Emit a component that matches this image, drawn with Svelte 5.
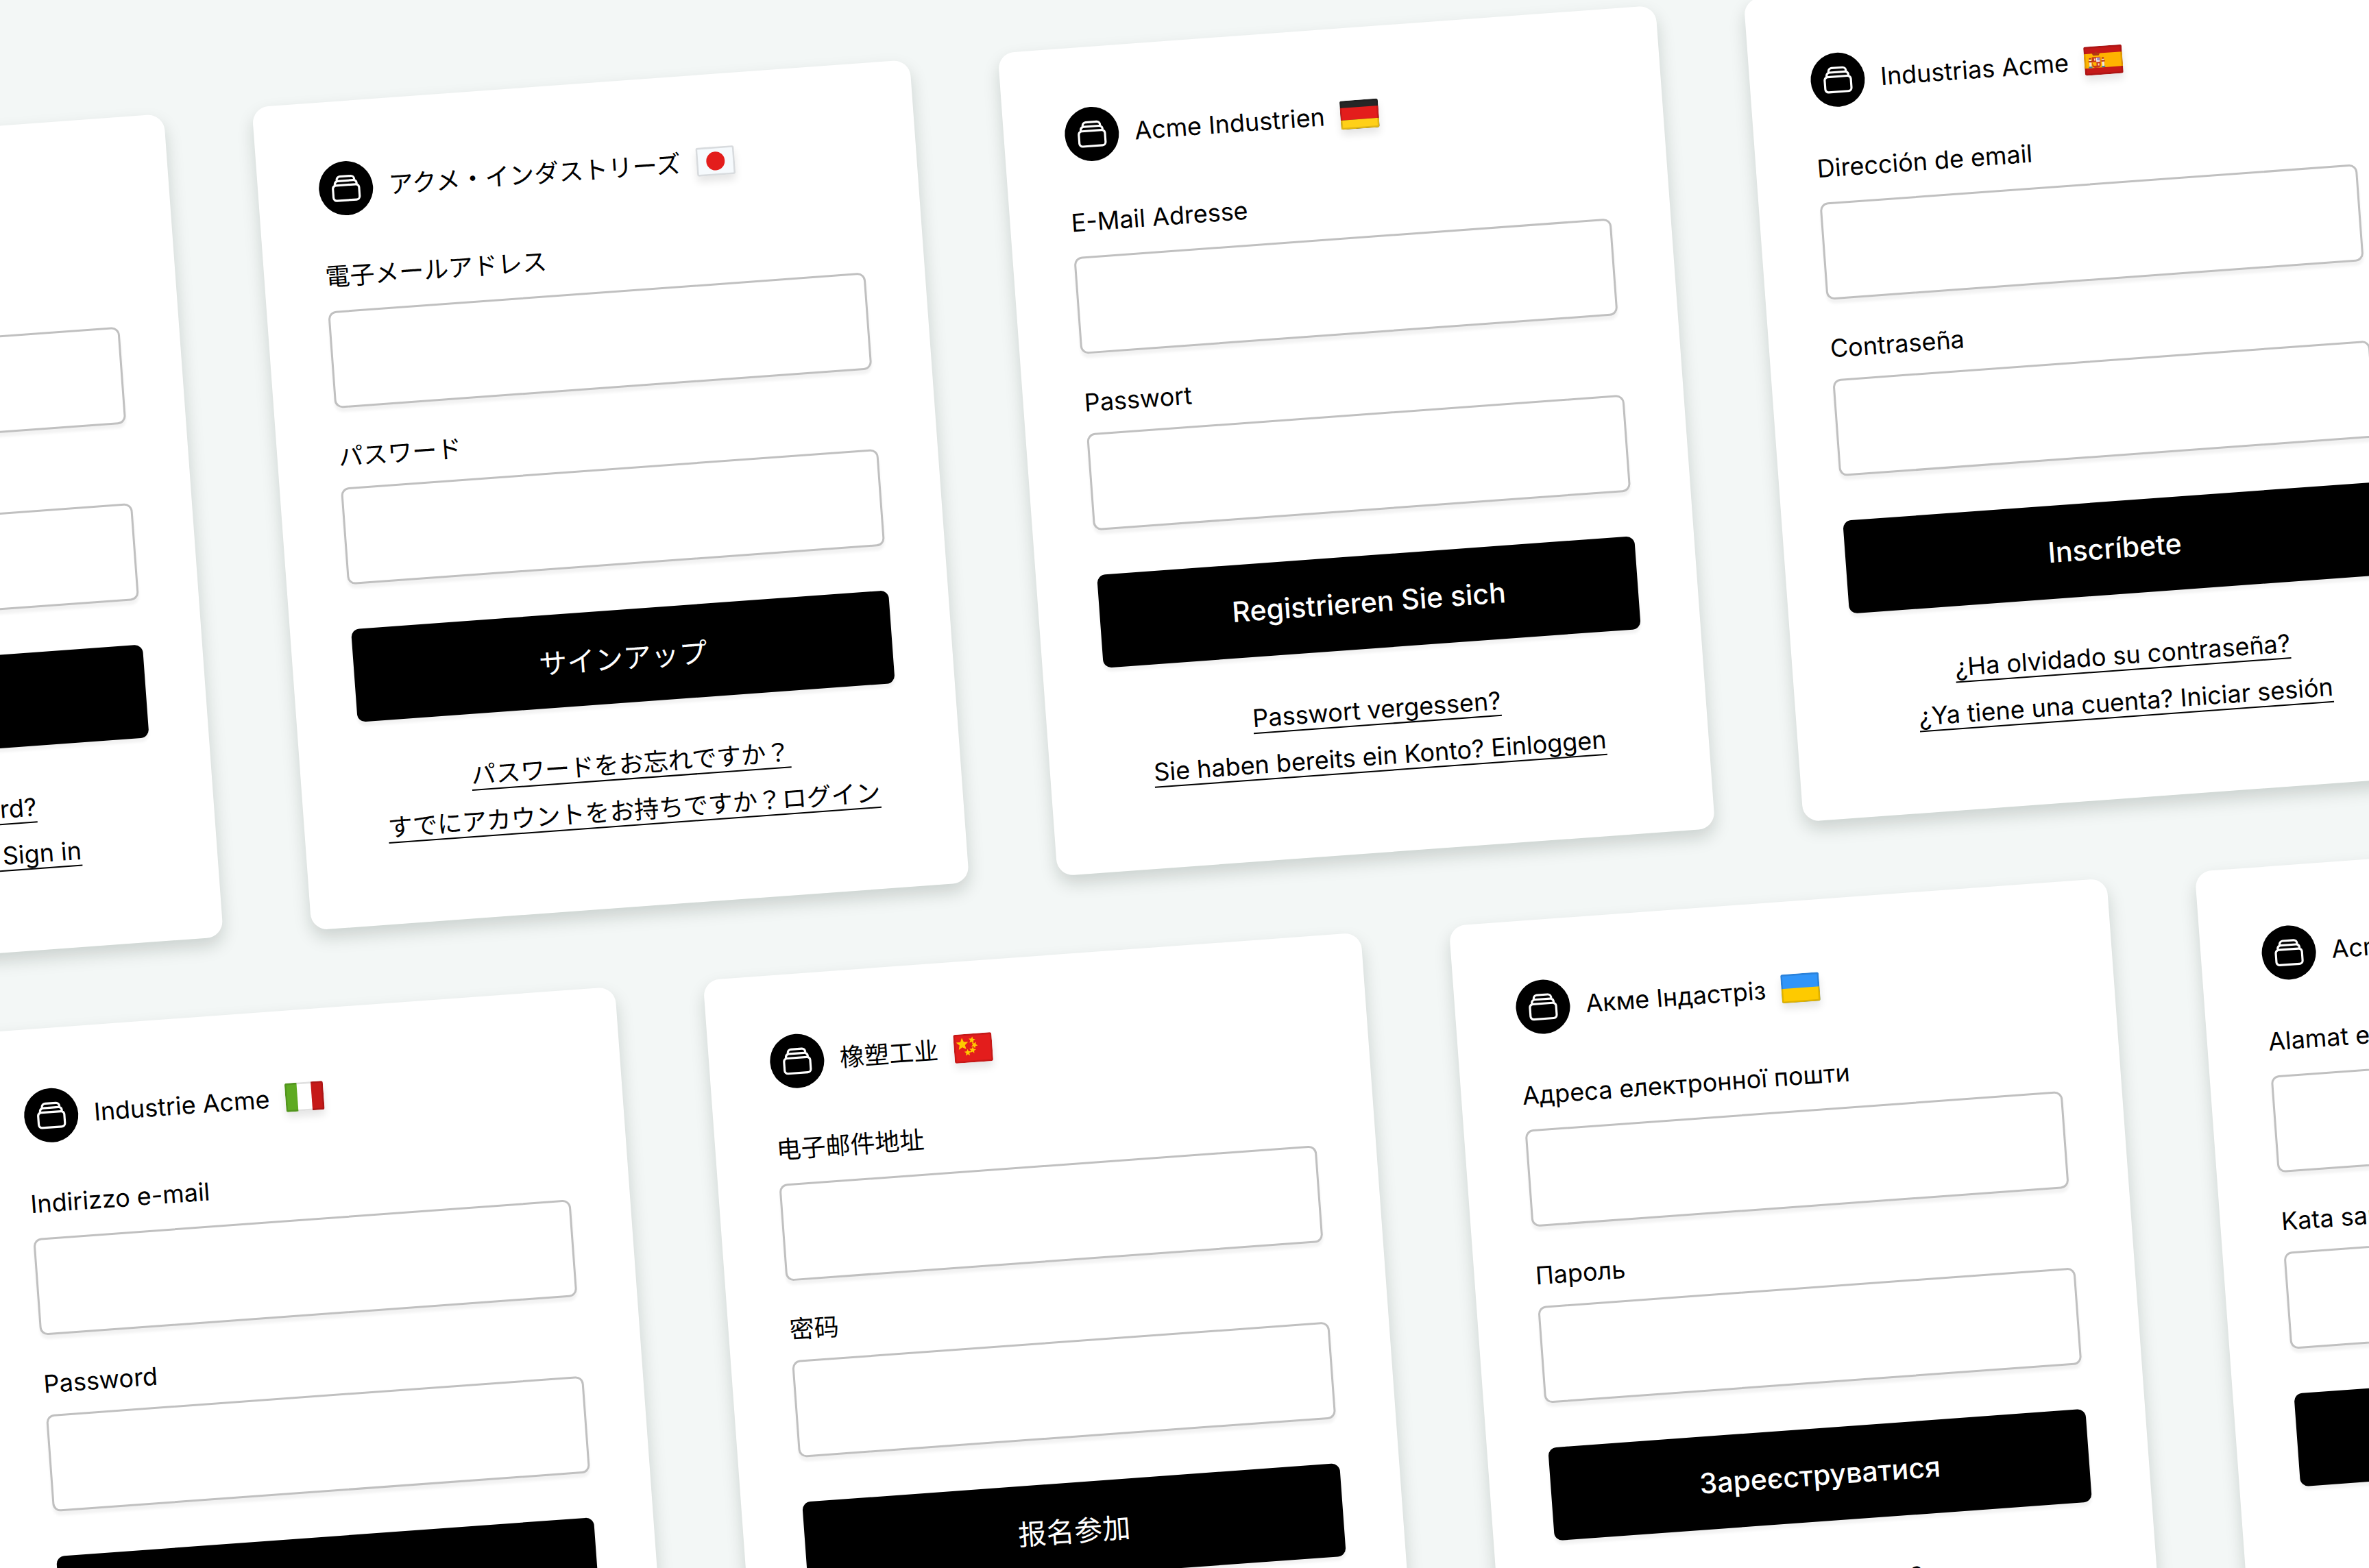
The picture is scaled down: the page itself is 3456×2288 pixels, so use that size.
<script>
  const rows = [
    [
      {
        lang: 'en',
        brand: 'Acme Industries',
        email: 'Email address',
        password: 'Password',
        submit: 'Sign up',
        forgot: 'Forgotten your password?',
        signIn: 'Already have an account? Sign in',
      },
      {
        lang: 'ja',
        brand: 'アクメ・インダストリーズ',
        email: '電子メールアドレス',
        password: 'パスワード',
        submit: 'サインアップ',
        forgot: 'パスワードをお忘れですか？',
        signIn: 'すでにアカウントをお持ちですか？ログイン',
      },
      {
        lang: 'de',
        brand: 'Acme Industrien',
        email: 'E-Mail Adresse',
        password: 'Passwort',
        submit: 'Registrieren Sie sich',
        forgot: 'Passwort vergessen?',
        signIn: 'Sie haben bereits ein Konto? Einloggen',
      },
      {
        lang: 'es',
        brand: 'Industrias Acme',
        email: 'Dirección de email',
        password: 'Contraseña',
        submit: 'Inscríbete',
        forgot: '¿Ha olvidado su contraseña?',
        signIn: '¿Ya tiene una cuenta? Iniciar sesión',
      },
    ],
    [
      {
        lang: 'it',
        brand: 'Industrie Acme',
        email: 'Indirizzo e-mail',
        password: 'Password',
        submit: 'Iscriviti',
        forgot: 'Password dimenticata?',
        signIn: 'Hai già un account? Accedi',
      },
      {
        lang: 'zh',
        brand: '橡塑工业',
        email: '电子邮件地址',
        password: '密码',
        submit: '报名参加',
        forgot: '忘记密码？',
        signIn: '已经有账户？登录',
      },
      {
        lang: 'uk',
        brand: 'Акме Індастріз',
        email: 'Адреса електронної пошти',
        password: 'Пароль',
        submit: 'Зареєструватися',
        forgot: 'Забули пароль?',
        signIn: 'Вже є акаунт? Увійти',
      },
      {
        lang: 'id',
        brand: 'Acme Industri',
        email: 'Alamat email',
        password: 'Kata sandi',
        submit: 'Daftar',
        forgot: 'Lupa kata sandi?',
        signIn: 'Sudah punya akun? Masuk',
      },
    ],
  ];

  // [cx, cy, radius, rotation in degrees]
  const stars = [
    [12, 14, 9, 0],
    [26, 9, 5, 10],
    [29, 16, 5, 30],
    [26, 23, 5, 10],
    [19, 26, 5, 0],
  ];

  function star([cx, cy, r, rot]) {
    const pts = [];
    for (let i = 0; i < 10; i++) {
      const a = ((i * 36 - 90 + rot) * Math.PI) / 180;
      const d = i % 2 ? r * 0.45 : r;
      pts.push(`${(cx + d * Math.cos(a)).toFixed(2)},${(cy + d * Math.sin(a)).toFixed(2)}`);
    }
    return pts.join(' ');
  }
</script>

<svelte:head>
  <title>Acme Industries</title>
</svelte:head>

{#snippet flag(lang)}
  <svg class="flag" viewBox="0 0 54 40" preserveAspectRatio="none" aria-hidden="true">
    {#if lang === 'ja'}
      <rect width="54" height="40" fill="#f6fafd" />
      <circle cx="27" cy="20" r="13" fill="#e31d1c" />
    {:else if lang === 'de'}
      <rect width="54" height="40" fill="#262626" />
      <rect y="10" width="54" height="17" fill="#e31d1c" />
      <rect y="27" width="54" height="13" fill="#ffd018" />
    {:else if lang === 'es'}
      <rect width="54" height="40" fill="#c51918" />
      <rect y="10" width="54" height="20" fill="#ffb400" />
      <path d="M13 13l-2-4 4 1 2-3 2 3 4-1-2 4z" fill="#af3a12" />
      <path d="M11 15h12v11q0 4-6 4t-6-4z" fill="#c8381a" />
      <path d="M17 16h5v6h-5z" fill="#f2e9ee" />
      <path d="M11 22h6v5h-4z" fill="#ffb400" />
      <circle cx="20" cy="18" r="2" fill="#9b8ec4" />
      <path d="M14 17h2v3h-2zM19 24h2v3h-2z" fill="#f9d9b8" />
      <path d="M7 18h3v10H7zM25 18h3v10h-3z" fill="#efe7e0" />
      <path d="M6 20h5v2H6zM24 20h5v2h-5zM7 16h3v2H7zM25 16h3v2h-3z" fill="#b3321c" />
      <path d="M6 28h5v2H6zM24 28h5v2h-5z" fill="#4a7fa0" />
    {:else if lang === 'it'}
      <rect width="54" height="40" fill="#fff" />
      <rect width="17" height="40" fill="#5eaa22" />
      <rect x="37" width="17" height="40" fill="#c51918" />
    {:else if lang === 'zh'}
      <rect width="54" height="40" fill="#e31d1c" />
      {#each stars as s}
        <polygon points={star(s)} fill="#feca00" />
      {/each}
    {:else if lang === 'uk'}
      <rect width="54" height="40" fill="#3195f9" />
      <rect y="20" width="54" height="20" fill="#feca00" />
    {:else if lang === 'id'}
      <rect width="54" height="40" fill="#fff" />
      <rect width="54" height="20" fill="#e31d1c" />
    {:else}
      <rect width="54" height="40" fill="#2e42a5" />
      <path d="M0 0l54 40M54 0L0 40" stroke="#fff" stroke-width="7" />
      <path d="M27 0v40M0 20h54" stroke="#fff" stroke-width="12" />
      <path d="M27 0v40M0 20h54" stroke="#e31d1c" stroke-width="7" />
    {/if}
    <rect x="1" y="1" width="52" height="38" rx="2" fill="none" stroke="#000" stroke-opacity="0.12" stroke-width="3" />
  </svg>
{/snippet}

<main>
  <div class="board">
    {#each rows as row}
      <div class="row">
        {#each row as card}
          <form class="card" lang={card.lang}>
            <header class="brand">
              <span class="logo">
                <svg viewBox="0 0 24 24" aria-hidden="true">
                  <path d="M6 6.878V6a2.25 2.25 0 012.25-2.25h7.5A2.25 2.25 0 0118 6v.878m-12 0c.235-.083.487-.128.75-.128h10.5c.263 0 .515.045.75.128m-12 0A2.25 2.25 0 004.5 9v.878m13.5-3A2.25 2.25 0 0119.5 9v.878m0 0a2.246 2.246 0 00-.75-.128H5.25c-.263 0-.515.045-.75.128m15 0A2.25 2.25 0 0121 12v6a2.25 2.25 0 01-2.25 2.25H5.25A2.25 2.25 0 013 18v-6c0-.98.626-1.813 1.5-2.122" />
                </svg>
              </span>
              <span>{card.brand}</span>
              {@render flag(card.lang)}
            </header>

            <label class="email-label" for="email-{card.lang}">{card.email}</label>
            <input id="email-{card.lang}" type="email" />

            <label class="password-label" for="password-{card.lang}">{card.password}</label>
            <input id="password-{card.lang}" type="password" />

            <button type="button">{card.submit}</button>

            <nav class="links">
              <a href="#forgot">{card.forgot}</a>
              <a href="#sign-in">{card.signIn}</a>
            </nav>
          </form>
        {/each}
      </div>
    {/each}
  </div>
</main>

<style>
  :global(body) {
    margin: 0;
    background: #f3f7f6;
  }

  main {
    height: 100vh;
    overflow: hidden;
    font-family: Inter, "Noto Sans CJK JP", sans-serif;
    font-size: 36px;
    line-height: 54px;
    color: #000;
  }

  /* The whole wall of cards is tilted around the top left corner */
  .board {
    display: flex;
    flex-direction: column;
    gap: 114px;
    padding-top: 183px;
    transform: rotate(-4.16deg);
    transform-origin: 0 0;
  }

  .row {
    display: flex;
    gap: 129px;
    margin-left: -736px;
  }

  .row:nth-child(2) {
    margin-left: -172px;
  }

  .card {
    box-sizing: border-box;
    flex: none;
    display: flex;
    flex-direction: column;
    width: 962px;
    padding: 87px 87px 107px 89px;
    border-radius: 24px;
    background: #fff;
    box-shadow: 0 12px 24px rgba(10, 30, 20, 0.17);
  }

  .card:lang(zh) {
    font-family: Inter, "Noto Sans CJK SC", sans-serif;
  }

  .brand {
    display: flex;
    align-items: center;
    gap: 23px;
    height: 80px;
  }

  .logo {
    display: flex;
    align-items: center;
    justify-content: center;
    width: 79px;
    height: 79px;
    border-radius: 50%;
    background: #000;
  }

  .logo svg {
    width: 51px;
    height: 51px;
    fill: none;
    stroke: #fff;
    stroke-width: 1.5;
    stroke-linecap: round;
    stroke-linejoin: round;
  }

  .flag {
    width: 56px;
    height: 42px;
    border-radius: 3px;
    box-shadow: 0 8px 12px rgba(0, 0, 0, 0.1);
  }

  .email-label {
    margin: 61px 0 23px;
  }

  .password-label {
    margin: 44px 0 18px;
  }

  input {
    box-sizing: border-box;
    height: 142px;
    padding: 0 32px;
    border: 3px solid #c0c0c0;
    border-radius: 12px;
    background: #fff;
    font: inherit;
    box-shadow: 0 6px 4px rgba(0, 0, 0, 0.05);
  }

  button {
    height: 136px;
    margin-top: 65px;
    border: none;
    border-radius: 12px;
    background: #000;
    color: #fff;
    font-family: inherit;
    font-size: 41px;
    font-weight: 500;
    box-shadow: 0 6px 4px rgba(0, 0, 0, 0.05);
  }

  button:lang(ja),
  button:lang(zh) {
    font-weight: 400;
  }

  .links {
    display: flex;
    flex-direction: column;
    align-items: center;
    margin-top: 55px;
    line-height: 68px;
  }

  a {
    color: inherit;
    text-decoration: underline;
    text-decoration-thickness: 2px;
    text-decoration-skip-ink: none;
    text-underline-offset: 8px;
  }
</style>
